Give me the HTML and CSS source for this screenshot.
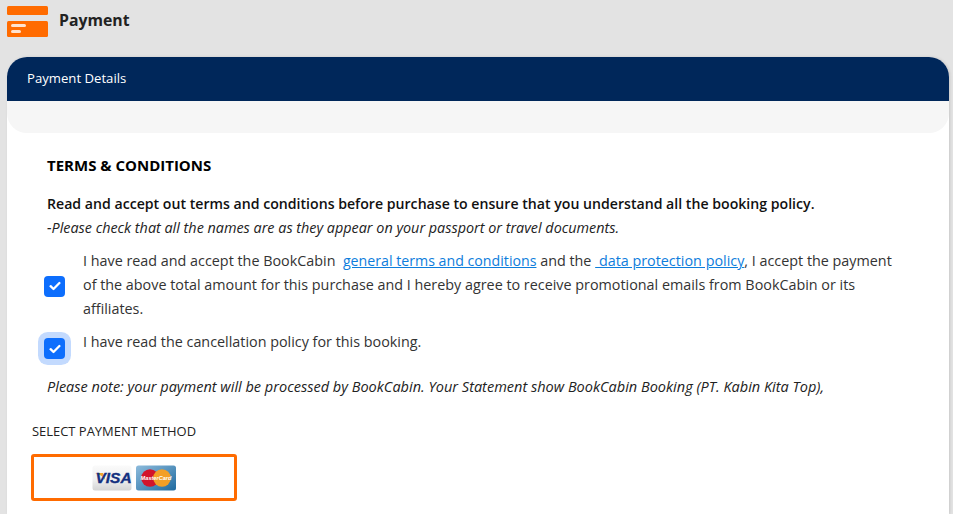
FILE: index.html
```html
<!DOCTYPE html>
<html lang="en">
<head>
<meta charset="utf-8">
<title>Payment</title>
<link rel="stylesheet" href="styles.css">
</head>
<body>
<header class="page-head">
  <svg class="head-icon" width="41" height="31" viewBox="0 0 41 31">
    <rect x="0" y="0" width="41" height="9" rx="1.5" fill="#ff6b00"/>
    <rect x="0" y="15" width="41" height="16" rx="1.5" fill="#ff6b00"/>
    <rect x="4" y="18" width="15" height="3" rx="1.5" fill="#ffe3cf"/>
    <rect x="4" y="24" width="10" height="3" rx="1.5" fill="#ffe3cf"/>
  </svg>
  <h1 class="page-title">Payment</h1>
</header>
<main class="card">
  <div class="card-head">Payment Details</div>
  <div class="card-strip"></div>
  <div class="card-body">
    <section class="terms">
      <h2 class="terms-title">TERMS &amp; CONDITIONS</h2>
      <p class="terms-lead">Read and accept out terms and conditions before purchase to ensure that you understand all the booking policy.</p>
      <p class="terms-note">-Please check that all the names are as they appear on your passport or travel documents.</p>
      <div class="check-row">
        <span class="check-box check-first"><svg width="12" height="10" viewBox="0 0 12 10"><path d="M1.6 5.2 4.5 8 10.4 2" fill="none" stroke="#fff" stroke-width="2.3" stroke-linecap="round" stroke-linejoin="round"/></svg></span>
        <p class="check-text">I have read and accept the BookCabin &nbsp;<a class="link-terms" href="#">general terms and conditions</a> and the <a href="#">&nbsp;data protection policy</a>, I accept the payment of the above total amount for this purchase and I hereby agree to receive promotional emails from BookCabin or its affiliates.</p>
      </div>
      <div class="check-row check-row-second">
        <span class="check-box check-focus"><svg width="12" height="10" viewBox="0 0 12 10"><path d="M1.6 5.2 4.5 8 10.4 2" fill="none" stroke="#fff" stroke-width="2.3" stroke-linecap="round" stroke-linejoin="round"/></svg></span>
        <p class="check-text">I have read the cancellation policy for this booking.</p>
      </div>
      <p class="terms-note terms-foot">Please note: your payment will be processed by BookCabin. Your Statement show BookCabin Booking (PT. Kabin Kita Top),</p>
    </section>
    <h3 class="method-title">SELECT PAYMENT METHOD</h3>
    <div class="method-box">
      <svg width="84" height="26" viewBox="0 0 84 26">
        <defs>
          <linearGradient id="visaBg" x1="0" y1="0" x2="0" y2="1"><stop offset="0" stop-color="#fafafa"/><stop offset=".55" stop-color="#f0f0f0"/><stop offset="1" stop-color="#d4d4d4"/></linearGradient>
          <linearGradient id="mcBg" x1="0" y1="0" x2="1" y2="1"><stop offset="0" stop-color="#8dbbdc"/><stop offset="1" stop-color="#1f6a9f"/></linearGradient>
        </defs>
        <rect x="0.5" y="0.5" width="39" height="25" rx="2.5" fill="url(#visaBg)"/>
        <path d="M3 8h8l2.5 7.5C11 11 7 9 3 8z" fill="#f0a72c"/>
        <text x="21.5" y="18" class="visa-text">VISA</text>
        <rect x="44" y="0.5" width="40" height="25" rx="2.5" fill="url(#mcBg)"/>
        <circle cx="58" cy="13" r="8.8" fill="#d2142b"/>
        <circle cx="70" cy="13" r="8.8" fill="#f39f26"/>
        <text x="64" y="15" class="mc-text">MasterCard</text>
      </svg>
    </div>
  </div>
</main>
</body>
</html>
```

FILE: styles.css
```css
html, body { margin: 0; padding: 0; height: 514px; overflow: hidden; }
body {
  background: #e3e3e3;
  font-family: "Open Sans", "Noto Sans", sans-serif;
  font-size: 14.35px;
  color: #333;
  padding: 0 4px 0 7px;
  box-sizing: border-box;
}
.page-head { display: flex; align-items: center; height: 57px; padding-bottom: 14px; box-sizing: border-box; gap: 11px; }
.head-icon { display: block; }
.page-title { margin: 0 0 4px; font-size: 15.8px; font-weight: 700; color: #222; }
.card { background: #fff; border-radius: 20px 20px 0 0; height: 457px; overflow: hidden; box-shadow: 1px 0 3px rgba(0,0,0,.12); }
.card-head { background: #00275a; color: #fff; height: 44px; line-height: 43px; padding-left: 20px; font-size: 13.15px; }
.card-strip { background: #f6f6f6; height: 32px; border-radius: 0 0 20px 20px; }
.card-body { padding: 22px 24px 0; }
.terms { padding: 0 16px; }
.terms-title { margin: 0; font-size: 15px; font-weight: 700; color: #000; line-height: 20px; }
.terms-lead { margin: 19px 0 0; font-size: 14.13px; font-weight: 600; color: #111; line-height: 20px; white-space: nowrap; }
.terms-note { margin: 4px 0 0; font-style: italic; color: #222; line-height: 20px; font-size: 14.38px; white-space: nowrap; }
.check-row { display: flex; align-items: center; gap: 18px; margin-top: 11px; width: 857px; }
.check-row-second { align-items: flex-start; margin-top: 9px; }
.check-box { flex: none; width: 21px; height: 21px; border-radius: 4px; background: #0d6efd; display: flex; align-items: center; justify-content: center; margin-left: -3px; }
.check-first { margin-top: 2px; }
.check-focus { box-shadow: 0 0 0 6px #c3dafe; margin-top: 8px; }
.check-text { margin: 0; line-height: 24px; color: #333; }
.check-text a { color: #0d7ddc; }
.check-text .link-terms { font-size: 14.2px; }
.terms-foot { margin-top: 17px; font-size: 14.53px; }
.method-title { margin: 26px 0 0; padding-left: 1px; font-size: 12.95px; font-weight: 400; color: #222; line-height: 18px; }
.method-box { margin-top: 14px; width: 206px; height: 47px; box-sizing: border-box; border: 3px solid #ff6b00; border-radius: 3px; display: flex; align-items: center; justify-content: center; }
.visa-text { font-family: "Liberation Sans", sans-serif; font-size: 15.5px; font-weight: 700; font-style: italic; fill: #14307f; stroke: #14307f; stroke-width: .35px; text-anchor: middle; }
.mc-text { font-family: "Liberation Sans", sans-serif; font-size: 5.6px; font-weight: 700; font-style: italic; fill: #fff; text-anchor: middle; }
```
